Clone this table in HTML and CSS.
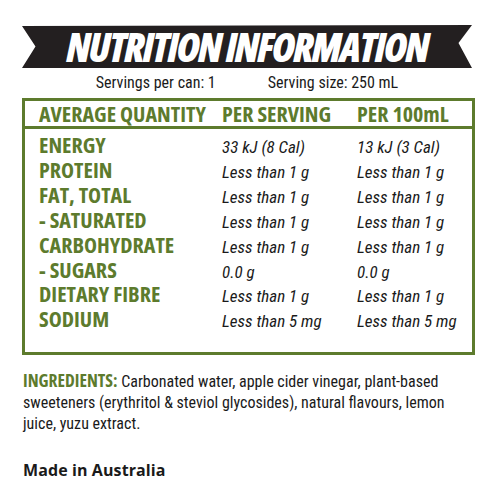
FILE: index.html
```html
<!DOCTYPE html>
<html lang="en">
<head>
    <meta charset="UTF-8">
    <meta name="viewport" content="width=device-width, initial-scale=1.0">
    <title>Nutrition Information</title>
    <link rel="stylesheet" href="styles.css">
</head>
<body>
    <div class="label">
        <!-- Black ribbon title -->
        <div class="ribbon">
            <span class="ribbon-text">NUTRITION INFORMATION</span>
        </div>

        <div class="servings">
            <span>Servings per can: 1</span>
            <span>Serving size: 250 mL</span>
        </div>

        <!-- Nutrition panel -->
        <div class="panel">
            <div class="panel-head">
                <span>AVERAGE QUANTITY</span>
                <span>PER SERVING</span>
                <span>PER 100mL</span>
            </div>
            <div class="panel-body">
                <span class="nutrient">ENERGY</span><span class="amount">33 kJ (8 Cal)</span><span class="amount">13 kJ (3 Cal)</span>
                <span class="nutrient">PROTEIN</span><span class="amount">Less than 1 g</span><span class="amount">Less than 1 g</span>
                <span class="nutrient">FAT, TOTAL</span><span class="amount">Less than 1 g</span><span class="amount">Less than 1 g</span>
                <span class="nutrient">- SATURATED</span><span class="amount">Less than 1 g</span><span class="amount">Less than 1 g</span>
                <span class="nutrient">CARBOHYDRATE</span><span class="amount">Less than 1 g</span><span class="amount">Less than 1 g</span>
                <span class="nutrient">- SUGARS</span><span class="amount">0.0 g</span><span class="amount">0.0 g</span>
                <span class="nutrient">DIETARY FIBRE</span><span class="amount">Less than 1 g</span><span class="amount">Less than 1 g</span>
                <span class="nutrient">SODIUM</span><span class="amount">Less than 5 mg</span><span class="amount">Less than 5 mg</span>
            </div>
        </div>

        <p class="ingredients">
            <span class="green-text">INGREDIENTS:</span> Carbonated water, apple cider vinegar, plant-based sweeteners (erythritol &amp; steviol glycosides), natural flavours, lemon juice, yuzu extract.
        </p>

        <p class="origin">Made in Australia</p>
    </div>
</body>
</html>
```
FILE: styles.css
```css
body, html {
    margin: 0;
    padding: 0;
    background-color: white;
}
.label {
    width: 453px;
    padding: 25px 0 0 22px;
    font-family: "Open Sans", "DejaVu Sans", sans-serif;
    font-stretch: 75%;
    color: #1a1a1a;
}

/* Title ribbon with notched ends */
.ribbon {
    width: 450px;
    height: 43px;
    background-color: #231f20;
    clip-path: polygon(0 1px, 100% 0, 97% 42%, 100% 100%, 0 100%, 3% 50%);
    display: flex;
    justify-content: center;
}
.ribbon-text {
    color: white;
    font-size: 40px;
    line-height: 43px;
    font-weight: 800;
    font-style: italic;
    letter-spacing: -1.7px;
}

.servings {
    display: flex;
    justify-content: center;
    gap: 52px;
    width: 450px;
    font-family: "Roboto Condensed", "Open Sans", sans-serif;
    font-size: 16px;
    line-height: 30px;
}

/* Green bordered table */
.panel {
    border: 3px solid #5d7b2d;
    width: 447px;
}
.panel-head,
.panel-body {
    display: grid;
    grid-template-columns: 183px 135px 1fr;
    align-items: baseline;
    padding-left: 14px;
}
.panel-head {
    border-bottom: 3px solid #5d7b2d;
    color: #5d7b2d;
    font-size: 22px;
    font-weight: 700;
    line-height: 25px;
}
.panel-body {
    padding-top: 3px;
    padding-bottom: 21px;
}
.nutrient {
    color: #5d7b2d;
    font-size: 22px;
    font-weight: 700;
    line-height: 24.9px;
}
.amount {
    font-family: "Roboto Condensed", "Open Sans", sans-serif;
    font-size: 17px;
    font-style: italic;
    line-height: 16px;
}

.ingredients {
    margin: 15px 0 0 1px;
    width: 450px;
    font-family: "Roboto Condensed", "Open Sans", sans-serif;
    font-size: 16px;
    line-height: 21px;
}
.green-text {
    color: #5d7b2d;
    font-family: "Open Sans", sans-serif;
    font-size: 17.5px;
    font-weight: 700;
}
.origin {
    margin: 26px 0 0 1px;
    font-size: 16px;
    line-height: 21px;
    font-weight: 700;
    font-stretch: 100%;
    letter-spacing: 0.1px;
}
```
